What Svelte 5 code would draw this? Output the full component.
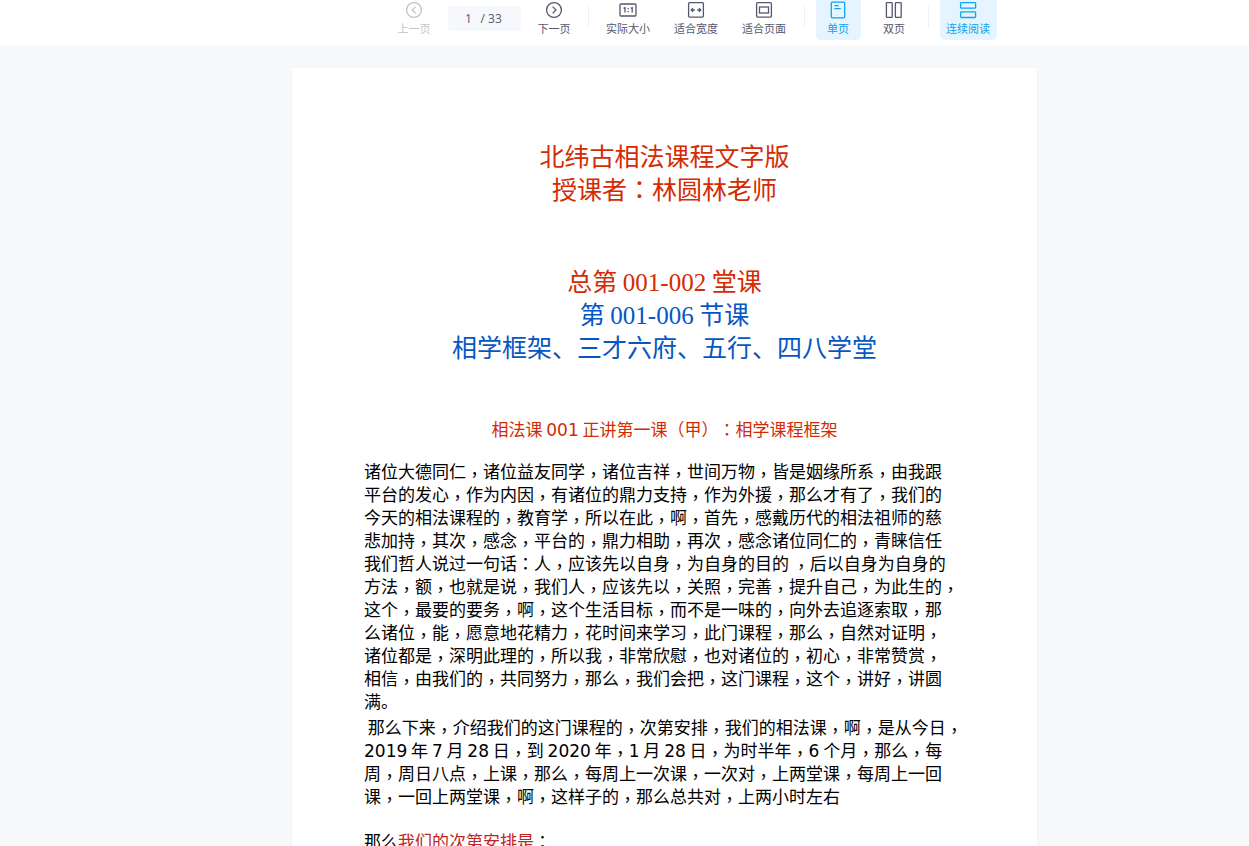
<script lang="ts">
  type Tool = { id: string, label: string, icon: string }

  const pageCount = 33
  let page = $state('1')
  let layout = $state('single')
  let continuous = $state(true)

  const zoomTools: Tool[] = [
    { id: 'actual', label: '实际大小', icon: 'actual' },
    { id: 'width', label: '适合宽度', icon: 'width' },
    { id: 'page', label: '适合页面', icon: 'page' }
  ]

  const layoutTools: Tool[] = [
    { id: 'single', label: '单页', icon: 'single' },
    { id: 'double', label: '双页', icon: 'double' }
  ]

  const paragraphs = [
    [
      '诸位大德同仁，诸位益友同学，诸位吉祥，世间万物，皆是姻缘所系，由我跟',
      '平台的发心，作为内因，有诸位的鼎力支持，作为外援，那么才有了，我们的',
      '今天的相法课程的，教育学，所以在此，啊，首先，感戴历代的相法祖师的慈',
      '悲加持，其次，感念，平台的，鼎力相助，再次，感念诸位同仁的，青睐信任',
      '我们哲人说过一句话：人，应该先以自身，为自身的目的 ，后以自身为自身的',
      '方法，额，也就是说，我们人，应该先以，关照，完善，提升自己，为此生的，',
      '这个，最要的要务，啊，这个生活目标，而不是一味的，向外去追逐索取，那',
      '么诸位，能，愿意地花精力，花时间来学习，此门课程，那么，自然对证明，',
      '诸位都是，深明此理的，所以我，非常欣慰，也对诸位的，初心，非常赞赏，',
      '相信，由我们的，共同努力，那么，我们会把，这门课程，这个，讲好，讲圆',
      '满。'
    ],
    [
      ' 那么下来，介绍我们的这门课程的，次第安排，我们的相法课，啊，是从今日，',
      '2019 年 7 月 28 日，到 2020 年，1 月 28 日，为时半年，6 个月，那么，每',
      '周，周日八点，上课，那么，每周上一次课，一次对，上两堂课，每周上一回',
      '课，一回上两堂课，啊，这样子的，那么总共对，上两小时左右'
    ]
  ]

  // numbers and centred punctuation use their own typefaces
  function kindOf(value: string) {
    if (/^[0-9-]+$/.test(value)) return 'num'
    if (value === '，') return 'punct comma'
    if (/^[：（）]$/.test(value)) return 'punct'
    return ''
  }

  function runs(text: string) {
    return text.split(/([0-9-]+|[，：（）])/).filter(Boolean).map(value => ({
      value,
      kind: kindOf(value)
    }))
  }
</script>

{#snippet rich(text: string)}{#each runs(text) as run}{#if run.kind}<span class={run.kind}>{run.value}</span>{:else}{run.value}{/if}{/each}{/snippet}

{#snippet icon(name: string)}
  <svg class="icon" viewBox="0 0 18 18" aria-hidden="true">
    {#if name === 'prev'}
      <circle cx="9" cy="9" r="7.4" />
      <path d="M10.6 5.6 7.2 9l3.4 3.4" />
    {:else if name === 'next'}
      <circle cx="9" cy="9" r="7.4" />
      <path d="M7.6 5.6 11 9l-3.4 3.4" />
    {:else if name === 'actual'}
      <rect x="1" y="3" width="16" height="12" rx="1" />
      <path d="M4.6 7.4 6 6.7v4.8M11.8 7.4l1.4-.7v4.8M9.2 7v1.2M9.2 10v1.2" />
    {:else if name === 'width'}
      <rect x="1.6" y="1.7" width="14.8" height="14.4" rx="1" />
      <path d="M7.8 9H4M6 7.2 4.2 9 6 10.8M10.2 9H14M12 7.2 13.8 9 12 10.8" />
    {:else if name === 'page'}
      <rect x="1.6" y="1.7" width="14.8" height="14.4" rx="1" />
      <rect x="4.5" y="6" width="9" height="6" />
    {:else if name === 'single'}
      <rect x="2.3" y="1.2" width="13.4" height="15.6" rx="1.2" />
      <path d="M5.4 4.6h4.4M5.4 7.7h6.4" />
    {:else if name === 'double'}
      <rect x="1.4" y="1.7" width="5.8" height="14.6" rx=".6" />
      <rect x="10.4" y="1.7" width="5.8" height="14.6" rx=".6" />
    {:else}
      <rect x="1.6" y="1.6" width="15" height="5.6" rx=".8" />
      <rect x="1.6" y="10.9" width="15" height="5.6" rx=".8" />
    {/if}
  </svg>
{/snippet}

<div class="reader">
  <header class="toolbar">
    <button class="tool" disabled={Number(page) <= 1}>
      {@render icon('prev')}
      <span>上一页</span>
    </button>
    <label class="pager">
      <input type="text" aria-label="页码" bind:value={page} />
      <span>/ {pageCount}</span>
    </label>
    <button class="tool" onclick={() => page = String(Number(page) + 1)}>
      {@render icon('next')}
      <span>下一页</span>
    </button>
    <i class="divider"></i>
    {#each zoomTools as tool}
      <button class="tool wide">
        {@render icon(tool.icon)}
        <span>{tool.label}</span>
      </button>
    {/each}
    <i class="divider"></i>
    {#each layoutTools as tool}
      <button class="tool" class:active={layout === tool.id} onclick={() => layout = tool.id}>
        {@render icon(tool.icon)}
        <span>{tool.label}</span>
      </button>
    {/each}
    <i class="divider"></i>
    <button class="tool wide" class:active={continuous} onclick={() => continuous = !continuous}>
      {@render icon('continuous')}
      <span>连续阅读</span>
    </button>
  </header>

  <main class="viewer">
    <article class="sheet">
      <h1 class="red">
        北纬古相法课程文字版<br />
        {@render rich('授课者：林圆林老师')}
      </h1>
      <h2>
        <span class="red">{@render rich('总第 001-002 堂课')}</span><br />
        {@render rich('第 001-006 节课')}<br />
        相学框架、三才六府、五行、四八学堂
      </h2>
      <h3 class="red">{@render rich('相法课 001 正讲第一课（甲）：相学课程框架')}</h3>
      {#each paragraphs as lines}
        <p>
          {#each lines as line}<span class="line">{@render rich(line)}</span>{/each}
        </p>
      {/each}
      <p class="next">{@render rich('那么')}<span class="crimson">我们的次第安排是</span>{@render rich('：')}</p>
    </article>
  </main>
</div>

<style>
  :global(body) {
    margin: 0;
    background: #f8f9fb;
  }

  .reader {
    display: flex;
    flex-direction: column;
    height: 100vh;
    font-family: "Noto Sans CJK SC", sans-serif;
    color: #55586c;
  }

  .toolbar {
    display: flex;
    justify-content: center;
    gap: 11px;
    flex: none;
    padding: 0 0 6px 139px;
    background: #fff;
  }

  .tool {
    display: flex;
    flex-direction: column;
    align-items: center;
    justify-content: flex-start;
    gap: 1px;
    min-width: 45px;
    height: 40px;
    padding: 0;
    border: 0;
    border-radius: 0 0 5px 5px;
    background: none;
    font: inherit;
    font-size: 11px;
    line-height: 16px;
    color: inherit;
    white-space: nowrap;
    cursor: pointer;
  }

  .tool.wide {
    min-width: 57px;
  }

  .tool:disabled {
    color: #c3c4c9;
    cursor: default;
  }

  .tool.active {
    background: #e5f4fe;
    color: #0ca4f3;
  }

  .icon {
    width: 18px;
    height: 18px;
    margin-top: 1px;
    fill: none;
    stroke: currentColor;
    stroke-width: 1.3;
  }

  .pager {
    display: flex;
    align-items: center;
    gap: 8px;
    box-sizing: border-box;
    width: 73px;
    height: 25px;
    margin-top: 6px;
    padding-left: 17px;
    border-radius: 4px;
    background: #f6f8fc;
    font-family: "Open Sans", sans-serif;
    font-size: 12px;
    line-height: 16px;
    white-space: nowrap;
  }

  .pager input {
    width: 8px;
    padding: 0;
    border: 0;
    outline: 0;
    background: none;
    font: inherit;
    color: inherit;
    text-align: center;
  }

  .divider {
    width: 1px;
    height: 22px;
    margin-top: 6px;
    background: #eff0f3;
  }

  .viewer {
    flex: 1;
    min-height: 0;
    padding: 22px 0 0 80px;
    overflow-y: auto;
    scrollbar-width: none;
  }

  .sheet {
    box-sizing: border-box;
    max-width: 745px;
    min-height: 1054px;
    margin: 0 auto;
    padding: 71px 0 72px;
    background: #fff;
    box-shadow: 0 0 4px rgba(60, 80, 120, 0.06);
    color: #000;
    text-spacing-trim: space-all;
  }

  h1,
  h2,
  h3 {
    margin: 0;
    font-weight: 400;
    text-align: center;
  }

  h1,
  h2 {
    font-size: 25px;
    line-height: 33px;
  }

  h2 {
    margin-top: 59px;
    color: #0656c4;
  }

  h3 {
    margin: 54px 0 19px;
    font-size: 17px;
    line-height: 23px;
  }

  p {
    margin: 0 0 3px;
    padding-left: 72px;
    font-size: 17px;
    line-height: 23px;
  }

  .line {
    display: block;
    white-space: pre;
  }

  .next {
    margin-top: 22px;
  }

  .red {
    color: #d42b03;
  }

  .crimson {
    color: #bf2426;
  }

  .num,
  .punct {
    line-height: 0;
  }

  .num {
    font-family: "DejaVu Sans", sans-serif;
  }

  h2 .num {
    font-family: "Liberation Serif", serif;
  }

  .punct {
    font-family: "Noto Sans CJK TC", sans-serif;
  }

  .comma {
    vertical-align: -3px;
  }
</style>
